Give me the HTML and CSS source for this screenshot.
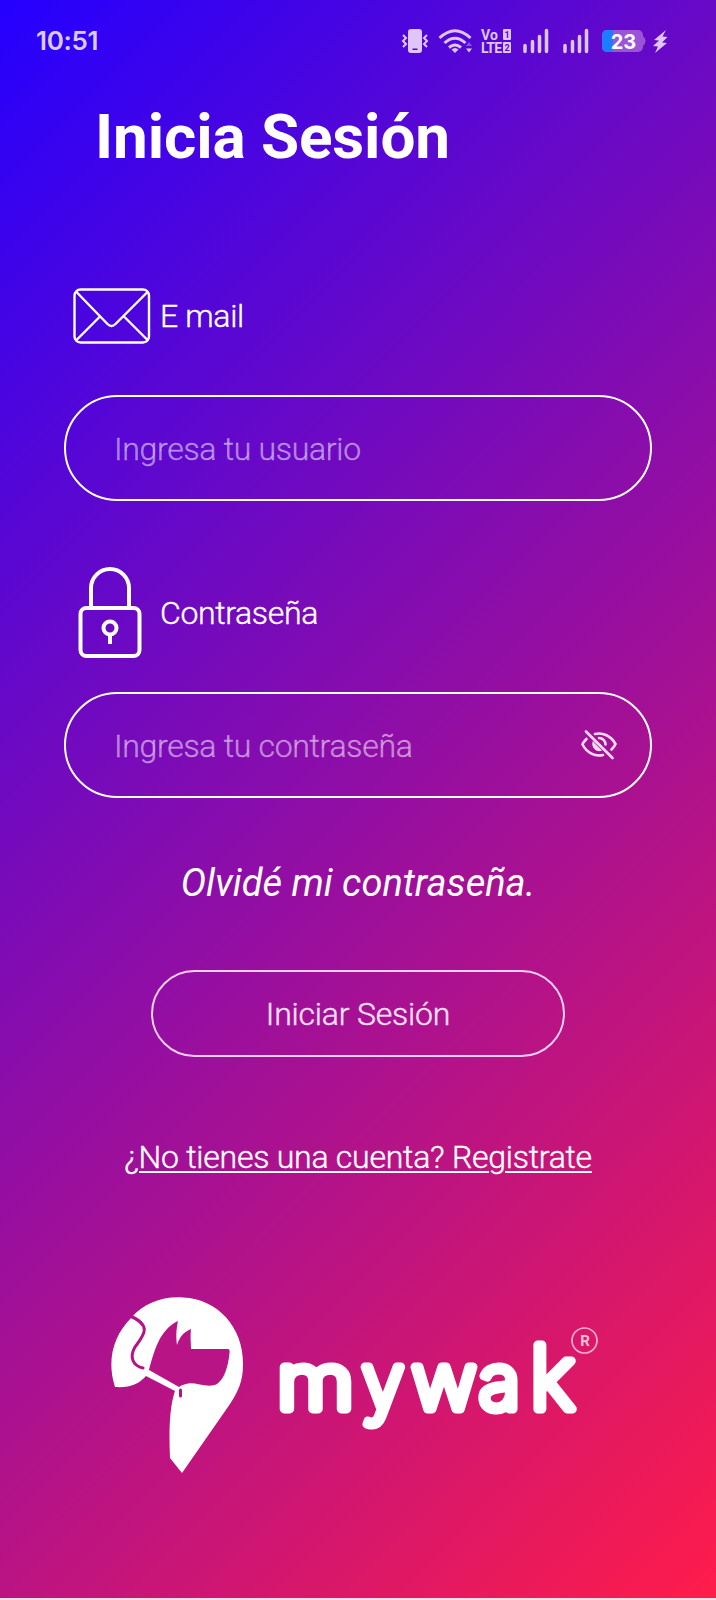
FILE: index.html
```
<!DOCTYPE html>
<html lang="es">
<head>
    <meta charset="UTF-8">
    <meta name="viewport" content="width=device-width, initial-scale=1.0">
    <title>Inicia Sesión</title>
    <link rel="stylesheet" href="styles.css">
</head>
<body>

<div class="screen">
    <!-- Barra de estado -->
    <div class="status-bar">
        <span class="clock">10:51</span>
        <svg class="status-icons" width="270" height="28" viewBox="0 0 270 28" fill="#dfc6fa">
            <!-- Vibración -->
            <rect x="7" y="2" width="14" height="24" rx="3"/>
            <rect x="11.500" y="21.500" width="5" height="1.500" fill="#5a06c8"/>
            <path d="M2 8l3 3-3 3 3 3-3 3M26 8l-3 3 3 3-3 3 3 3" fill="none" stroke="#dfc6fa" stroke-width="2"/>
            <!-- Wifi -->
            <path d="M38.500 11q15.500-14.500 31 0M43.500 16q10.500-9.500 21 0M48 20.500q6-5 12 0" fill="none" stroke="#dfc6fa" stroke-width="3"/>
            <path d="M50.500 22.500q3.500-3 7 0L54 26z"/>
            <path d="M65 19h6l-3-4z" opacity=".4"/>
            <path d="M65 21.500h6l-3 4z"/>
            <!-- VoLTE -->
            <text class="lte" x="80" y="12.500" textLength="17">Vo</text>
            <text class="lte" x="80" y="26" textLength="21">LTE</text>
            <rect x="102" y="2" width="8" height="11" rx="1"/>
            <rect x="102" y="15" width="8" height="11" rx="1"/>
            <text class="sim" x="103.500" y="11">1</text>
            <text class="sim" x="103.500" y="24">2</text>
            <!-- Señal -->
            <g class="bars">
                <path d="M124 18.500v6M131.500 14.500v10M138.500 9.500v15M145.500 3.500v21"/>
                <path d="M164 18.500v6M171.500 14.500v10M178.500 9.500v15M185.500 3.500v21"/>
            </g>
            <!-- Batería -->
            <rect x="201" y="3" width="41" height="22" rx="5" fill="#9a55d6"/>
            <path d="M242 9q5 5 0 10z" fill="#9a55d6"/>
            <path d="M206 3h6v22h-6a5 5 0 0 1-5-5V8a5 5 0 0 1 5-5z" fill="#1d7dff"/>
            <text class="battery" x="222.500" y="21.500" text-anchor="middle">23</text>
            <path d="M265 3l-12 10 5 .5-6 5.500 5 .5-3 6.500 12-10-5-.5 5.500-5.500-5-.5z"/>
        </svg>
    </div>

    <h1>Inicia Sesión</h1>

    <form>
        <!-- Email -->
        <label class="label label-email" for="email">
            <svg width="78" height="56" viewBox="0 0 78 56" fill="none" stroke="#fff" stroke-width="2.400">
                <rect x="1.500" y="1.500" width="74.500" height="53" rx="6"/>
                <path d="M3 3.500l31.500 32.500q4 4 8 0L75 3.500M3 52.500l24-24M75 52.500l-24-24"/>
            </svg>
            <span class="email-text">E mail</span>
        </label>
        <div class="field">
            <input type="text" id="email" class="user" placeholder="Ingresa tu usuario">
        </div>

        <!-- Contraseña -->
        <label class="label label-password" for="password">
            <svg width="64" height="91" viewBox="0 0 64 91" fill="none" stroke="#fff" stroke-width="4">
                <rect x="2.500" y="41" width="59" height="48" rx="6"/>
                <path d="M13 41V21a19 19 0 0 1 38 0v20"/>
                <circle cx="32" cy="61" r="6.500"/>
                <path d="M32 67v10"/>
            </svg>
            <span>Contraseña</span>
        </label>
        <div class="field">
            <input type="password" id="password" placeholder="Ingresa tu contraseña">
            <svg class="eye" width="36" height="30" viewBox="0 0 36 30" fill="none" stroke="#f8dcf6" stroke-width="2.600" stroke-linecap="round">
                <path d="M14 4C22 2 30 6 34.500 14 33.500 16.500 32 18 30.500 19.500"/>
                <path d="M5.500 9C3.500 11 2 12.500 1.500 14.500 6 23 14 27 22 25"/>
                <path d="M18 8a6.500 6.500 0 0 1 6.500 6.500"/>
                <path d="M12 12c-1.500 5 3 10 8 8.500z" fill="#f8dcf6" stroke-width="1"/>
                <path d="M5 1.500L31.500 28"/>
            </svg>
        </div>

        <a class="forgot" href="#">Olvidé mi contraseña.</a>
        <button type="button">Iniciar Sesión</button>
        <a class="register" href="#">¿No tienes una cuenta? Registrate</a>
    </form>

    <!-- Logo -->
    <svg class="logo" width="490" height="180" viewBox="0 0 490 180" fill="#fff">
        <path d="M20.500 20.500C33 6 52 -1 72 .5C108 2 133 32 132 68C132 84 127 95 119 107L71 176L59 161C58 138 58 111 64 94L35 79C28 87 19 91 4 90C-4 65 1 40 20.500 20.500Z"/>
        <path class="cut" d="M38 73C43 55 48 33 67 24C65 34 65 40 66 48C69 39 73 35 80 32C79 40 80 46 80 52H117Q119 52 118.500 56C117 71 113 82 106 87C97 92 83 84 75 87Q70 88 68 90Z"/>
        <path class="cut-line" d="M19 19C43 29 31 40 24 50C18 60 22 69 32 71M69.500 93v6"/>
        <text class="brand" y="111.500"><tspan x="166" textLength="77" lengthAdjust="spacingAndGlyphs">m</tspan><tspan x="251">y</tspan><tspan x="301" textLength="64" lengthAdjust="spacingAndGlyphs">w</tspan><tspan x="368">a</tspan><tspan x="419" class="brand-k">k</tspan></text>
        <circle cx="473.500" cy="43.500" r="12.500" fill="none" stroke="#f6a9d2" stroke-width="1.700"/>
        <text class="reg" x="474" y="49" text-anchor="middle">R</text>
    </svg>
</div>

</body>
</html>
```
FILE: styles.css
```
* {
    margin: 0;
    padding: 0;
    box-sizing: border-box;
}

body {
    font-family: Roboto, sans-serif;
    color: #fff;
}

.screen {
    height: 1600px;
    border-bottom: 2px solid #f6dfe8;
    background: linear-gradient(135deg, #2400ff, #ff1c4a);
    overflow: hidden;
}

/* Barra de estado */
.status-bar {
    display: flex;
    justify-content: space-between;
    align-items: center;
    height: 28px;
    margin: 27px 45px 0 36px;
}

.clock {
    font: 600 26px Inter, sans-serif;
    color: #dccbff;
    letter-spacing: -0.3px;
    line-height: 26px;
}

.lte {
    font: 700 14px Roboto, sans-serif;
}

.sim {
    font: 700 9px Roboto, sans-serif;
    fill: #5a06c8;
}

.bars {
    stroke: #dfc6fa;
    stroke-width: 3.5px;
    stroke-linecap: round;
}

.battery {
    font: 700 20px Inter, sans-serif;
    fill: #fff;
}

h1 {
    margin: 45px 0 0 95px;
    font-size: 62px;
    line-height: 74px;
    letter-spacing: -0.1px;
}

form {
    display: flex;
    flex-direction: column;
    align-items: center;
    width: 588px;
    margin: 113px 0 0 64px;
    font-size: 32px;
    font-weight: 300;
    letter-spacing: -0.35px;
    -webkit-text-stroke: 0.4px;
}

/* Etiquetas */
.label {
    display: flex;
    align-items: center;
    align-self: flex-start;
}

.label-email {
    height: 58px;
    margin-left: 9px;
    gap: 9px;
}

.label-password {
    height: 91px;
    margin: 66px 0 0 14px;
    gap: 18px;
}

/* Campos */
.field {
    position: relative;
    width: 100%;
    height: 106px;
    margin-top: 50px;
}

.label-password + .field {
    margin-top: 34px;
}

.field input {
    width: 100%;
    height: 100%;
    padding: 2px 90px 0 48px;
    border: 2px solid #fff;
    border-radius: 53px;
    outline: none;
    background: transparent;
    color: #fff;
    font: inherit;
    letter-spacing: -0.3px;
}

.field input::placeholder {
    color: rgba(255, 255, 255, 0.47);
}

.eye {
    position: absolute;
    top: 38px;
    right: 35px;
}

.forgot {
    margin-top: 62px;
    color: #fff;
    font-size: 38px;
    font-style: italic;
    font-weight: 400;
    line-height: 46px;
    letter-spacing: 0;
    text-decoration: none;
    -webkit-text-stroke: 0;
}

button {
    width: 414px;
    height: 87px;
    margin-top: 64px;
    border: 2px solid #f8d0f0;
    border-radius: 44px;
    background: transparent;
    color: #fbe0f6;
    font: inherit;
    letter-spacing: -0.2px;
}

.register {
    margin-top: 80px;
    color: #fff;
    line-height: 40px;
    letter-spacing: -0.25px;
    text-decoration: underline;
    text-decoration-thickness: 2px;
    text-underline-offset: 3px;
    white-space: nowrap;
}

/* Logo */
.logo {
    display: block;
    margin: 120px 0 0 111px;
}

.cut {
    fill: #b81486;
}

.cut-line {
    fill: none;
    stroke: #b31389;
    stroke-width: 3;
    stroke-linecap: round;
}

.brand {
    font: 200 76px Inter, sans-serif;
    stroke: #fff;
    stroke-width: 9px;
    stroke-linecap: round;
    stroke-linejoin: round;
}

.brand-k {
    font-size: 88px;
}

.reg {
    font: 700 15px Roboto, sans-serif;
    fill: #f8bfdc;
}
```
